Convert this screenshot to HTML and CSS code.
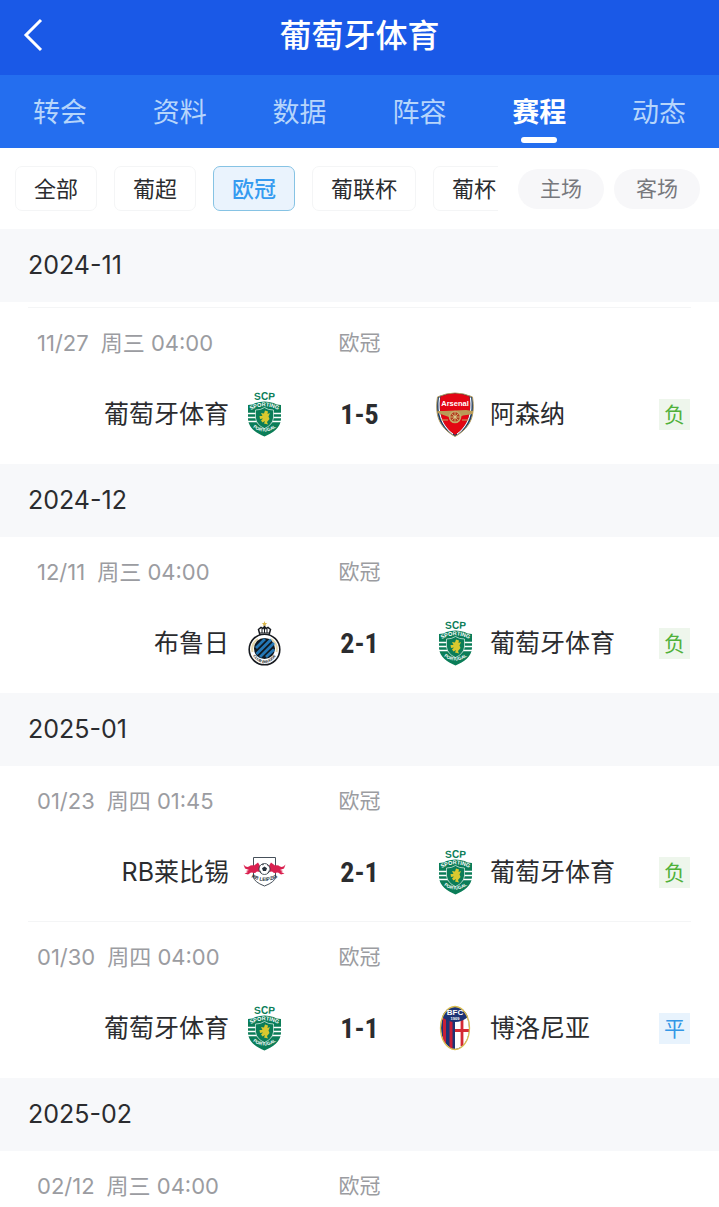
FILE: index.html
```html
<!DOCTYPE html>
<html lang="zh-CN">
<head>
<meta charset="utf-8">
<meta name="viewport" content="width=device-width, initial-scale=1">
<title>葡萄牙体育</title>
<link rel="stylesheet" href="styles.css">
</head>
<body>
<svg class="sprite" aria-hidden="true">
  <symbol id="sporting" viewBox="0 0 46 48">
    <path id="scp-top" d="M9 10.500Q23.500 8.500 38 10.500" fill="none"/>
    <text class="crest-text" font-size="10" fill="#0b7d58" text-anchor="middle"><textPath href="#scp-top" startOffset="50%">SCP</textPath></text>
    <path d="M7 15Q12 15 14.500 13Q23.500 10 32.500 13Q35 15 40 15L40 29C39.500 38 32 43 23.500 46.500C15 43 7.500 38 7 29Z" fill="#0b7d58"/>
    <path d="M6 23.500H41M6 27.500H41M6 31.500H41" stroke="#fff" stroke-width="1.700"/>
    <path d="M14.500 20Q20 20 23.500 17.500Q27 20 32.500 20V28Q31.500 35 23.500 38.500Q15.500 35 14.500 28Z" fill="#0b7d58" stroke="#e8f3ee" stroke-width=".7"/>
    <path d="M24 20.500L27 21.500L26.500 24L29 23L27.500 26.500L28.500 29L26 32L27 34.500L23 33.500L24 31L21.500 32.500L20 30.500L22 28.500L19 29L18.500 26L21.500 26L20 23L23 23.500Z" fill="#d9c92f"/>
    <path id="scp-name" d="M9 20.500Q23.500 12 38 20.500" fill="none"/>
    <text class="crest-text" font-size="5.500" fill="#fff" text-anchor="middle"><textPath href="#scp-name" startOffset="50%">SPORTING</textPath></text>
    <path id="scp-foot" d="M9 35Q23.500 48 38 35" fill="none"/>
    <text class="crest-text" font-size="4.500" fill="#fff" text-anchor="middle"><textPath href="#scp-foot" startOffset="50%">PORTUGAL</textPath></text>
  </symbol>
  <symbol id="arsenal" viewBox="0 0 46 48">
    <path d="M5.500 7Q23 -1 40.500 7C43 24 40 37 23 46.500C6 37 3 24 5.500 7Z" fill="#173a6c" stroke="#b39a5c" stroke-width="1"/>
    <path d="M7.500 7.500C5.500 23 9 35 21 44M38.500 7.500C40.500 23 37 35 25 44" fill="none" stroke="#fff" stroke-width="1.200"/>
    <path d="M8.500 6.500Q23 .5 37.500 6.500C39.500 23 37 35 23 45C9 35 6.500 23 8.500 6.500Z" fill="#e30613"/>
    <text class="crest-text" x="23" y="16" font-size="7.500" fill="#fff" text-anchor="middle">Arsenal</text>
    <path d="M5.500 21H12L34 20L41 21V24L31 25.500L28 27H17L10 24.500L5.500 23Z" fill="#b99b57"/>
    <circle cx="23" cy="27" r="5.500" fill="#b53b20" stroke="#c6a967" stroke-width="1.600"/>
    <path d="M23 22V32M18 27H28M19.500 23.500L26.500 30.500M26.500 23.500L19.500 30.500M9 30H16M30 30H37" stroke="#c6a967" stroke-width="1"/>
    <circle cx="23" cy="27" r="1.500" fill="#ddc889"/>
  </symbol>
  <symbol id="brugge" viewBox="0 0 46 48">
    <path d="M23.500 2L24.200 4L26.300 4L24.700 5.300L25.300 7.300L23.500 6.100L21.700 7.300L22.300 5.300L20.700 4L22.800 4Z" fill="#d9b64c"/>
    <path d="M19 16L17.500 10.500L20 8.500L22 9.500L23.500 7.500L25 9.500L27 8.500L29.500 10.500L28 16Z" fill="#fff" stroke="#171a20" stroke-width="1.500"/>
    <path d="M21 10V14M23.500 9V14M26 10V14M19 14H28" stroke="#171a20" stroke-width="1"/>
    <circle cx="23.500" cy="30.500" r="15.300" fill="#fff" stroke="#171a20" stroke-width="1.600"/>
    <path d="M11.500 33A12.500 12.500 0 0 1 17 20M30 20A12.500 12.500 0 0 1 35.500 33" fill="none" stroke="#e4d6aa" stroke-width="2"/>
    <circle cx="23.500" cy="29.500" r="10.500" fill="#101820"/>
    <path d="M15 29L24 20M15.500 35L30 20.500M19 38L33 24M25 38L33 30.500" stroke="#2477b5" stroke-width="2.800"/>
    <path id="brugge-name" d="M10 34Q23.500 54.500 37 34" fill="none"/>
    <text class="crest-text" font-size="3.800" fill="#171a20" text-anchor="middle"><textPath href="#brugge-name" startOffset="50%">CLUB BRUGGE</textPath></text>
  </symbol>
  <symbol id="leipzig" viewBox="0 0 46 48">
    <path d="M12.500 9.500H34.500V29Q34 34 23.500 38Q13 34 12.500 29Z" fill="#fff" stroke="#46505a" stroke-width="1"/>
    <path id="leip" d="M2.500 16.500Q5 20 8 18.500Q10 16.500 13 17.500L17 14.500L18.500 17L20 20L18 21L19 24L16 23.500L14 25L10 24.500L7 26.500L3.500 25.500L7 24L5 23L8 22L4 20.500Z" fill="#d9204f"/>
    <use href="#leip" transform="translate(47 0) scale(-1 1)"/>
    <circle cx="23.500" cy="21" r="5.500" fill="#fff" stroke="#26303a" stroke-width=".8"/>
    <path d="M23.500 18.500L26 20.300L25 23H22L21 20.300ZM20.500 16.500L23 16L22 17.500ZM26.500 16.500L28 18.500L26.500 18ZM19 22L20.500 24.500L19.500 25ZM28 22L26.500 25L27.500 25Z" fill="#26303a"/>
    <path id="leip-name" d="M9 28.500Q23.500 37.500 38 28.500" fill="none"/>
    <text class="crest-text" font-size="5" fill="#26303a" text-anchor="middle"><textPath href="#leip-name" startOffset="50%">RB LEIPZIG</textPath></text>
  </symbol>
  <symbol id="bologna" viewBox="0 0 46 48">
    <ellipse cx="23" cy="24" rx="14" ry="21" fill="#1c3375"/>
    <path d="M11 13H14V40L11 36ZM17.500 16H20.500V45L17.500 43Z" fill="#c81f37"/>
    <path d="M23 16L35 13Q39 25 35 35Q31 44 23 45Z" fill="#fff"/>
    <path d="M30 14V42M23 26.500H37" stroke="#d42a34" stroke-width="2.800"/>
    <path d="M10 13Q14 3 23 3Q32 3 36 13Q30 18 23 18Q16 18 10 13Z" fill="#1c3375"/>
    <ellipse cx="23" cy="24" rx="14.500" ry="21.500" fill="none" stroke="#d9bd50" stroke-width="1.300"/>
    <text class="crest-text" x="23" y="11" font-size="8" fill="#fff" text-anchor="middle">BFC</text>
    <text class="crest-text" x="23" y="15.500" font-size="4" fill="#fff" text-anchor="middle">1909</text>
  </symbol>
</svg>

<header class="topbar">
  <button class="back" aria-label="返回"><svg viewBox="0 0 20 34"><path d="M18 2L3 17L18 32"/></svg></button>
  <h1 class="title">葡萄牙体育</h1>
</header>
<nav class="tabs">
  <a class="tab" href="#">转会</a>
  <a class="tab" href="#">资料</a>
  <a class="tab" href="#">数据</a>
  <a class="tab" href="#">阵容</a>
  <a class="tab tab-active" href="#" aria-current="page">赛程</a>
  <a class="tab" href="#">动态</a>
</nav>
<div class="filters">
  <div class="leagues">
    <button class="chip">全部</button>
    <button class="chip">葡超</button>
    <button class="chip chip-active">欧冠</button>
    <button class="chip">葡联杯</button>
    <button class="chip">葡杯</button>
  </div>
  <div class="venues">
    <button class="pill">主场</button>
    <button class="pill">客场</button>
  </div>
</div>
<main>
  <section>
    <h2 class="month">2024-11</h2>
    <div class="matches matches-first">
      <article class="match">
        <div class="meta"><span class="date"><span>11/27</span><span>周三 04:00</span></span><span class="league">欧冠</span></div>
        <div class="row">
          <div class="team home"><span>葡萄牙体育</span><svg class="crest"><use href="#sporting"/></svg></div>
          <strong class="score">1-5</strong>
          <div class="team"><svg class="crest"><use href="#arsenal"/></svg><span>阿森纳</span><span class="result loss">负</span></div>
        </div>
      </article>
    </div>
  </section>
  <section>
    <h2 class="month">2024-12</h2>
    <div class="matches">
      <article class="match">
        <div class="meta"><span class="date"><span>12/11</span><span>周三 04:00</span></span><span class="league">欧冠</span></div>
        <div class="row">
          <div class="team home"><span>布鲁日</span><svg class="crest"><use href="#brugge"/></svg></div>
          <strong class="score">2-1</strong>
          <div class="team"><svg class="crest"><use href="#sporting"/></svg><span>葡萄牙体育</span><span class="result loss">负</span></div>
        </div>
      </article>
    </div>
  </section>
  <section>
    <h2 class="month">2025-01</h2>
    <div class="matches">
      <article class="match">
        <div class="meta"><span class="date"><span>01/23</span><span>周四 01:45</span></span><span class="league">欧冠</span></div>
        <div class="row">
          <div class="team home"><span>RB莱比锡</span><svg class="crest"><use href="#leipzig"/></svg></div>
          <strong class="score">2-1</strong>
          <div class="team"><svg class="crest"><use href="#sporting"/></svg><span>葡萄牙体育</span><span class="result loss">负</span></div>
        </div>
      </article>
      <article class="match">
        <div class="meta"><span class="date"><span>01/30</span><span>周四 04:00</span></span><span class="league">欧冠</span></div>
        <div class="row">
          <div class="team home"><span>葡萄牙体育</span><svg class="crest"><use href="#sporting"/></svg></div>
          <strong class="score">1-1</strong>
          <div class="team"><svg class="crest"><use href="#bologna"/></svg><span>博洛尼亚</span><span class="result draw">平</span></div>
        </div>
      </article>
    </div>
  </section>
  <section>
    <h2 class="month">2025-02</h2>
    <div class="matches">
      <article class="match match-partial">
        <div class="meta"><span class="date"><span>02/12</span><span>周三 04:00</span></span><span class="league">欧冠</span></div>
      </article>
    </div>
  </section>
</main>
</body>
</html>
```

FILE: styles.css
```css
* {
  box-sizing: border-box;
}

body {
  margin: 0;
  background: #fff;
  color: #2b2c2f;
  font-family: Inter, "Noto Sans CJK SC", sans-serif;
}

button {
  margin: 0;
  border: 0;
  font: inherit;
  white-space: nowrap;
}

.sprite {
  display: none;
}

.crest-text {
  font-family: "Liberation Sans", sans-serif;
  font-weight: 700;
}

.topbar {
  display: grid;
  grid-template-columns: 64px 1fr 64px;
  align-items: center;
  height: 75px;
  padding-bottom: 6px;
  background: #1a59e7;
  color: #fff;
}

.back {
  display: flex;
  padding: 0 0 0 23px;
  background: none;
}

.back svg {
  width: 20px;
  height: 34px;
  fill: none;
  stroke: #fff;
  stroke-width: 3;
}

.title {
  margin: 0;
  padding-bottom: 4px;
  font-size: 32px;
  font-weight: 500;
  text-align: center;
}

.tabs {
  display: grid;
  grid-template-columns: repeat(6, 1fr);
  height: 73px;
  background: #246eef;
}

.tab {
  position: relative;
  color: #b6d5fb;
  font-size: 27px;
  line-height: 76px;
  text-align: center;
  text-decoration: none;
}

.tab-active {
  color: #fff;
  font-weight: 700;
}

.tab-active::after {
  content: "";
  position: absolute;
  bottom: 8px;
  left: 50%;
  width: 36px;
  height: 6px;
  margin-left: -18px;
  border-radius: 3px;
  background: #fff;
}

.filters {
  display: flex;
  align-items: center;
  gap: 20px;
  height: 81px;
  padding: 0 19px 0 15px;
}

.leagues {
  display: flex;
  flex: 1;
  gap: 17px;
  min-width: 0;
  overflow: hidden;
}

.chip {
  flex: none;
  height: 45px;
  padding: 0 18px 3px;
  border: 1px solid #f4f5f6;
  border-radius: 7px;
  background: #fff;
  color: #2b2c2f;
  font-size: 22px;
}

.chip-active {
  border-color: #86c3e4;
  background: #eaf3fd;
  color: #369bf0;
  font-weight: 500;
}

.venues {
  display: flex;
  gap: 10px;
}

.pill {
  height: 40px;
  padding: 0 22px 3px;
  border-radius: 20px;
  background: #f7f7f9;
  color: #77787d;
  font-size: 21px;
}

.month {
  margin: 0;
  padding: 0 28px;
  background: #f7f8fa;
  font-size: 25px;
  font-weight: 400;
  line-height: 73px;
}

.matches-first {
  padding-top: 6px;
}

.match {
  position: relative;
  padding: 19px 29px 26px;
}

.matches-first .match::before,
.match + .match::before {
  content: "";
  position: absolute;
  top: -1px;
  right: 28px;
  left: 28px;
  height: 1px;
  background: #f4f5f6;
}

.match-partial {
  padding-bottom: 5px;
}

.meta,
.row {
  display: grid;
  grid-template-columns: 1fr 145px 1fr;
  align-items: center;
}

.meta {
  color: #9b9ca1;
  font-size: 22px;
  line-height: 32px;
}

.date {
  display: flex;
  gap: 12px;
  padding-left: 8px;
}

.league {
  font-size: 21px;
  text-align: center;
}

.row {
  height: 48px;
  margin-top: 31px;
}

.team {
  display: flex;
  align-items: center;
  gap: 12px;
  font-size: 25px;
  line-height: 32px;
  white-space: nowrap;
}

.home {
  justify-content: flex-end;
}

.crest {
  flex: none;
  width: 46px;
  height: 48px;
}

.score {
  font-family: "Liberation Sans Narrow", "Roboto Condensed", Roboto, sans-serif;
  font-size: 28px;
  text-align: center;
}

.result {
  width: 31px;
  margin-left: auto;
  font-size: 21px;
  line-height: 31px;
  text-align: center;
}

.loss {
  background: #eef6ec;
  color: #50b13a;
}

.draw {
  background: #e8f3fd;
  color: #3497e6;
}
```
